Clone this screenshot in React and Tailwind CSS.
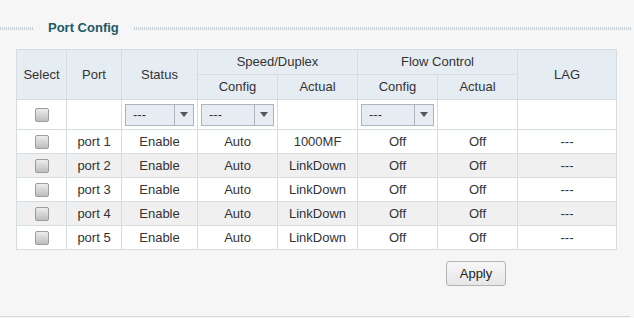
import React from "react";

const ports = [
  { name: "port 1", status: "Enable", config: "Auto", actual: "1000MF", fcConfig: "Off", fcActual: "Off", lag: "---" },
  { name: "port 2", status: "Enable", config: "Auto", actual: "LinkDown", fcConfig: "Off", fcActual: "Off", lag: "---" },
  { name: "port 3", status: "Enable", config: "Auto", actual: "LinkDown", fcConfig: "Off", fcActual: "Off", lag: "---" },
  { name: "port 4", status: "Enable", config: "Auto", actual: "LinkDown", fcConfig: "Off", fcActual: "Off", lag: "---" },
  { name: "port 5", status: "Enable", config: "Auto", actual: "LinkDown", fcConfig: "Off", fcActual: "Off", lag: "---" },
];

function Checkbox() {
  return (
    <span className="inline-block w-[14px] h-[14px] rounded-[2px] border border-[#9c9c9c] bg-[linear-gradient(#ececec,#bdbdbd)] align-middle" />
  );
}

function Dropdown({ width }) {
  return (
    <div
      className={`flex h-[22px] border border-[#a9b6c1] bg-[#e6ecf2] text-[#333] mx-auto ${width}`}
    >
      <span className="flex-1 text-left pl-[7px] leading-[20px] text-[13px]">---</span>
      <span className="w-[19px] border-l border-[#a9b6c1] flex items-center justify-center">
        <svg width="8" height="5" viewBox="0 0 8 5">
          <path d="M0 0h8L4 5z" fill="#555" />
        </svg>
      </span>
    </div>
  );
}

const th = "border border-[#d3dde3] font-normal";
const td = "border border-[#d6dde2] text-center";

export default function App() {
  return (
    <div
      className="w-[634px] h-[318px] bg-[#f6f6f6] text-[#333] text-[13px] relative"
      style={{ fontFamily: '"Liberation Sans", Arial, sans-serif' }}
    >
      {/* title */}
      <div className="flex items-center h-[52px] pt-[4px]">
        <div className="w-[34px] h-[3px] mt-[1px] bg-[repeating-linear-gradient(90deg,#c6ced4_0_1px,transparent_1px_2px)]" />
        <div className="pl-[14px] pr-[15px] font-bold text-[#1b5a66] text-[13px]">Port Config</div>
        <div className="w-[497px] h-[3px] mt-[1px] bg-[repeating-linear-gradient(90deg,#c6ced4_0_1px,transparent_1px_2px)]" />
      </div>

      <div className="pl-[16px] -mt-[3px]">
        <table className="border-collapse table-fixed w-[600px] border border-[#cfd9df]">
          <colgroup>
            <col className="w-[50px]" />
            <col className="w-[55px]" />
            <col className="w-[76px]" />
            <col className="w-[80px]" />
            <col className="w-[80px]" />
            <col className="w-[80px]" />
            <col className="w-[80px]" />
            <col className="w-[99px]" />
          </colgroup>
          <thead className="bg-[#e5edf2]">
            <tr className="h-[25px]">
              <th rowSpan={2} className={th}>Select</th>
              <th rowSpan={2} className={th}>Port</th>
              <th rowSpan={2} className={th}>Status</th>
              <th colSpan={2} className={th}>Speed/Duplex</th>
              <th colSpan={2} className={th}>Flow Control</th>
              <th rowSpan={2} className={th}>LAG</th>
            </tr>
            <tr className="h-[25px]">
              <th className={th}>Config</th>
              <th className={th}>Actual</th>
              <th className={th}>Config</th>
              <th className={th}>Actual</th>
            </tr>
          </thead>
          <tbody>
            <tr className="h-[30px] bg-white">
              <td className={td}><Checkbox /></td>
              <td className={td}></td>
              <td className={td}><Dropdown width="w-[69px]" /></td>
              <td className={td}><Dropdown width="w-[73px]" /></td>
              <td className={td}></td>
              <td className={td}><Dropdown width="w-[73px]" /></td>
              <td className={td}></td>
              <td className={td}></td>
            </tr>
            {ports.map((p, i) => (
              <tr key={p.name} className={`h-[24px] ${i % 2 === 1 ? "bg-[#f0f0f0]" : "bg-white"}`}>
                <td className={td}><Checkbox /></td>
                <td className={td}>{p.name}</td>
                <td className={td}>{p.status}</td>
                <td className={td}>{p.config}</td>
                <td className={td}>{p.actual}</td>
                <td className={td}>{p.fcConfig}</td>
                <td className={td}>{p.fcActual}</td>
                <td className={td}>{p.lag}</td>
              </tr>
            ))}
          </tbody>
        </table>
      </div>

      <div className="flex justify-end pr-[128px] pt-[11px]">
        <button className="w-[60px] h-[25px] rounded-[3px] border border-[#b3b3b3] bg-[linear-gradient(#f7f7f7,#e6e6e6)] text-[13px] text-[#222]">
          Apply
        </button>
      </div>

      <div className="absolute left-0 right-[4px] top-[316px] border-t border-[#d9d9d9]" />
    </div>
  );
}
